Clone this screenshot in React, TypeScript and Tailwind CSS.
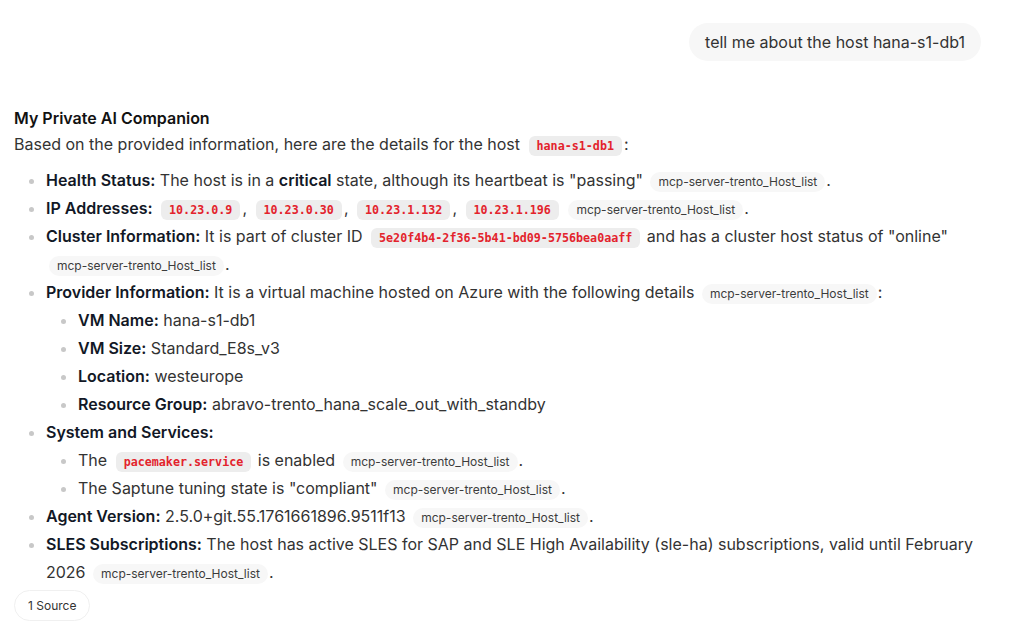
import React from "react";

const Code = ({ children }: { children: React.ReactNode }) => (
  <code className="ml-[4px] mr-[2px] inline-block rounded-md bg-[#ededed] px-[8px] py-0 align-middle font-['DejaVu_Sans_Mono',monospace] text-[11.7px] leading-[20px] font-semibold text-[#e3232c]">
    {children}
  </code>
);

const Cite = () => (
  <span className="ml-[3px] mr-[1px] inline-block rounded-[10px] bg-[#f7f7f7] px-[8px] align-middle text-[12px] leading-[20px] text-[#3c3c3c]">
    mcp-server-trento_Host_list
  </span>
);

const B = ({ children }: { children: React.ReactNode }) => (
  <span className="font-semibold text-[#121826]">{children}</span>
);

export default function App() {
  return (
    <div className="min-h-screen bg-white font-['Inter',sans-serif] text-[16px] text-[#333333]">
      <div className="flex justify-end pt-[23px] pr-[36px]">
        <div className="rounded-full bg-[#f7f7f7] px-[16px] leading-[38px] text-[#333333]">
          tell me about the host hana-s1-db1
        </div>
      </div>
      <div className="mt-[45px] pl-[14px] pr-[30px]">
        <div className="leading-6 font-semibold text-[#121212]">My Private AI Companion</div>
        <p className="leading-7">
          Based on the provided information, here are the details for the host <Code>hana-s1-db1</Code>:
        </p>
        <ul className="mt-2 list-disc pl-[32px] leading-7 marker:text-[#c8c8c8]">
          <li>
            <B>Health Status:</B> The host is in a <B>critical</B> state, although its heartbeat is "passing" <Cite />.
          </li>
          <li>
            <B>IP Addresses:</B> <Code>10.23.0.9</Code>, <Code>10.23.0.30</Code>, <Code>10.23.1.132</Code>,{" "}
            <Code>10.23.1.196</Code> <Cite />.
          </li>
          <li>
            <B>Cluster Information:</B> It is part of cluster ID <Code>5e20f4b4-2f36-5b41-bd09-5756bea0aaff</Code> and has a
            cluster host status of "online" <Cite />.
          </li>
          <li>
            <B>Provider Information:</B> It is a virtual machine hosted on Azure with the following details <Cite />:
            <ul className="list-disc pl-[32px] marker:text-[#c8c8c8]">
              <li>
                <B>VM Name:</B> hana-s1-db1
              </li>
              <li>
                <B>VM Size:</B> Standard_E8s_v3
              </li>
              <li>
                <B>Location:</B> westeurope
              </li>
              <li>
                <B>Resource Group:</B> abravo-trento_hana_scale_out_with_standby
              </li>
            </ul>
          </li>
          <li>
            <B>System and Services:</B>
            <ul className="list-disc pl-[32px] marker:text-[#c8c8c8]">
              <li>
                The <Code>pacemaker.service</Code> is enabled <Cite />.
              </li>
              <li>
                The Saptune tuning state is "compliant" <Cite />.
              </li>
            </ul>
          </li>
          <li>
            <B>Agent Version:</B> 2.5.0+git.55.1761661896.9511f13 <Cite />.
          </li>
          <li>
            <B>SLES Subscriptions:</B> The host has active SLES for SAP and SLE High Availability (sle-ha) subscriptions, valid
            until February 2026 <Cite />.
          </li>
        </ul>
        <button className="mt-1 h-[31px] rounded-full border border-[#f0f0f0] bg-white px-[13px] text-[12px] text-[#333333]">
          1 Source
        </button>
      </div>
    </div>
  );
}
